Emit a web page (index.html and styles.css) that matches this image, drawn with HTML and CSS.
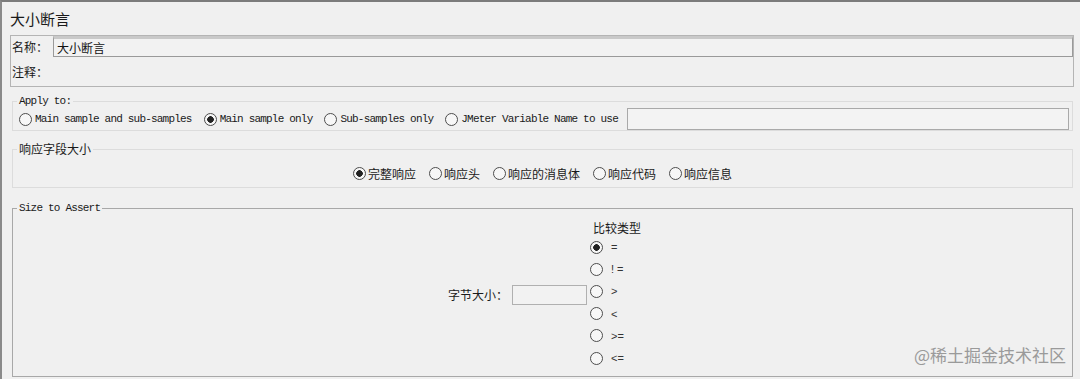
FILE: index.html
```html
<!DOCTYPE html>
<html lang="zh-CN">
<head>
<meta charset="UTF-8">
<title>大小断言</title>
<link rel="stylesheet" href="styles.css">
</head>
<body>
<div class="frame">
  <h1 class="title">大小断言</h1>

  <div class="namebox">
    <div class="name-row">
      <label class="cn-label" for="name">名称：</label>
      <input type="text" id="name" class="name-input" value="大小断言">
    </div>
    <div class="name-row comment-row">
      <label class="cn-label">注释：</label>
    </div>
  </div>

  <fieldset class="group apply">
    <legend class="mono">Apply to:</legend>
    <div class="radio-line">
      <label class="opt mono"><input type="radio" name="scope" class="radio">Main sample and sub-samples</label>
      <label class="opt mono"><input type="radio" name="scope" class="radio" checked>Main sample only</label>
      <label class="opt mono"><input type="radio" name="scope" class="radio">Sub-samples only</label>
      <label class="opt mono"><input type="radio" name="scope" class="radio">JMeter Variable Name to use</label>
      <input type="text" class="var-input">
    </div>
  </fieldset>

  <fieldset class="group field">
    <legend class="cn">响应字段大小</legend>
    <div class="radio-line centered">
      <label class="opt cn"><input type="radio" name="part" class="radio" checked>完整响应</label>
      <label class="opt cn"><input type="radio" name="part" class="radio">响应头</label>
      <label class="opt cn"><input type="radio" name="part" class="radio">响应的消息体</label>
      <label class="opt cn"><input type="radio" name="part" class="radio">响应代码</label>
      <label class="opt cn"><input type="radio" name="part" class="radio">响应信息</label>
    </div>
  </fieldset>

  <fieldset class="group size">
    <legend class="mono">Size to Assert</legend>
    <div class="size-body">
      <label class="cn size-label" for="bytes">字节大小：</label>
      <input type="text" id="bytes" class="size-input">
      <div class="compare">
        <div class="cn compare-title">比较类型</div>
        <label class="cmp"><input type="radio" name="op" class="radio" checked>=</label>
        <label class="cmp"><input type="radio" name="op" class="radio">! =</label>
        <label class="cmp"><input type="radio" name="op" class="radio">&gt;</label>
        <label class="cmp"><input type="radio" name="op" class="radio">&lt;</label>
        <label class="cmp"><input type="radio" name="op" class="radio">&gt;=</label>
        <label class="cmp"><input type="radio" name="op" class="radio">&lt;=</label>
      </div>
    </div>
  </fieldset>

  <div class="watermark">@稀土掘金技术社区</div>
</div>
</body>
</html>
```

FILE: styles.css
```css
body {
  margin: 0;
  background: #f0f0f0;
  color: #1a1a1a;
  font-family: "Noto Sans CJK SC", "Noto Sans", sans-serif;
}

.frame {
  position: relative;
  box-sizing: border-box;
  height: 379px;
  border-top: 2px solid #7c7c7c;
  border-left: 2px solid #8a8a8a;
  padding: 7px 6px 0 8px;
  display: flex;
  flex-direction: column;
}

.cn {
  font-family: "Noto Sans CJK SC", sans-serif;
  font-size: 12px;
}

.mono {
  font-family: "Liberation Mono", "DejaVu Sans Mono", monospace;
  font-size: 11px;
  letter-spacing: -0.8px;
}

.title {
  margin: 0;
  font-weight: normal;
  font-size: 15px;
  line-height: 20px;
  height: 20px;
}

/* name / comment box */
.namebox {
  margin-top: 6px;
  height: 50px;
  border: 1px solid #b4b4b4;
  display: flex;
  flex-direction: column;
}

.name-row {
  display: flex;
  align-items: center;
  height: 21px;
}

.comment-row {
  height: 29px;
}

.cn-label {
  font-size: 12px;
  width: 40px;
  padding-left: 1px;
  flex: none;
}

.name-input {
  flex: 1;
  height: 21px;
  box-sizing: border-box;
  margin: 0 0 0 1px;
  padding: 0 3px;
  border: 1px solid #9a9a9a;
  border-top: 3px solid #c9c9c9;
  background: #f2f2f2;
  font-family: "Noto Sans CJK SC", sans-serif;
  font-size: 12px;
  color: #111;
}

/* titled groups */
.group {
  margin: 0 1px 0 2px;
  padding: 0;
  border: 1px solid #dcdcdc;
  min-width: 0;
}

.group legend {
  padding: 0 2px;
  margin-left: 4px;
  line-height: 12px;
}

.apply {
  margin-top: 8px;
  height: 36px;
  box-sizing: border-box;
}

.field {
  margin-top: 12px;
  height: 45px;
  box-sizing: border-box;
}

.size {
  margin-top: 14px;
  height: 175px;
  box-sizing: border-box;
  border-color: #a8a8a8;
}

.radio-line {
  display: flex;
  align-items: center;
  gap: 12px;
  padding: 1px 3px 0 6px;
}

.centered {
  justify-content: center;
  padding: 10px 0 0;
  gap: 13px;
}

.opt {
  display: flex;
  align-items: center;
  gap: 3px;
  white-space: nowrap;
}

.centered .opt {
  gap: 2px;
}

.radio {
  appearance: none;
  -webkit-appearance: none;
  width: 13px;
  height: 13px;
  margin: 0;
  border: 1px solid #4d4d4d;
  border-radius: 50%;
  background: #f7f7f7;
  box-sizing: border-box;
  flex: none;
}

.radio:checked {
  background: radial-gradient(circle, #222 0, #222 3px, #f7f7f7 3.6px);
}

.var-input {
  flex: 1;
  height: 22px;
  box-sizing: border-box;
  margin: 0 0 0 -3px;
  border: 1px solid #a9a9a9;
  background: #f3f3f3;
}

/* size to assert */
.size-body {
  display: flex;
  justify-content: center;
  align-items: center;
  padding: 6px 0 0 4px;
}

.size-label {
  margin-right: 4px;
}

.size-input {
  width: 75px;
  height: 20px;
  box-sizing: border-box;
  margin: 0 3px 0 0;
  border: 1px solid #b0b0b0;
  background: #f2f2f2;
}

.compare {
  display: flex;
  flex-direction: column;
}

.compare-title {
  padding-left: 3px;
  height: 16px;
  line-height: 16px;
}

.cmp {
  display: flex;
  align-items: center;
  gap: 8px;
  height: 22.2px;
  font-family: "Liberation Sans", sans-serif;
  font-size: 11px;
  color: #333;
}

.watermark {
  position: absolute;
  right: 14px;
  bottom: 12px;
  font-size: 17px;
  color: #9a9a9a;
  font-family: "Noto Sans CJK SC", sans-serif;
}
```
